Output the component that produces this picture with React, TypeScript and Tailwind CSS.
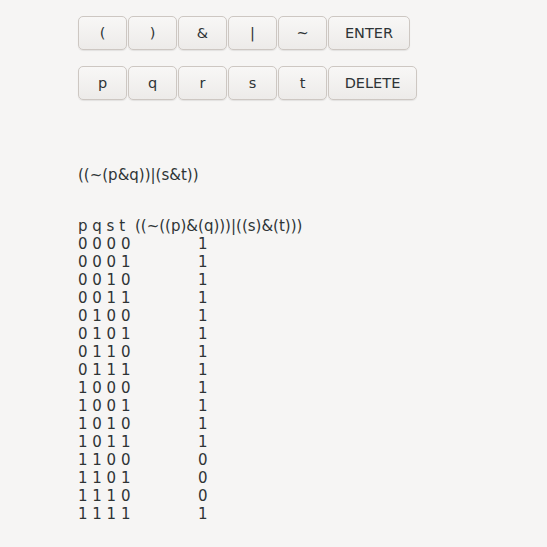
import React from "react";

const row1 = ["(", ")", "&", "|", "~"];
const row2 = ["p", "q", "r", "s", "t"];

function Key({ label, w = "w-[49px]" }: { label: string; w?: string }) {
  return (
    <button
      className={`${w} h-[34px] pt-[2px] rounded-[5px] border border-[#cdc7c2] bg-gradient-to-b from-[#f8f7f6] to-[#edebe9] text-[14.5px] text-[#2e3436] shadow-[0_1px_1px_rgba(0,0,0,0.08)]`}
    >
      {label}
    </button>
  );
}

export default function App() {
  const rows: { bits: number[]; out: number }[] = [];
  for (let i = 0; i < 16; i++) {
    const p = (i >> 3) & 1;
    const q = (i >> 2) & 1;
    const s = (i >> 1) & 1;
    const t = i & 1;
    const out = !(p && q) || (s && t) ? 1 : 0;
    rows.push({ bits: [p, q, s, t], out });
  }

  return (
    <div
      className="w-[547px] h-[547px] bg-[#f6f5f4] text-[#2e3436] pl-[78px] pt-[16px]"
      style={{ fontFamily: '"DejaVu Sans", sans-serif' }}
    >
      <div className="flex flex-col gap-[16px]">
        <div className="flex gap-[1px]">
          {row1.map((k) => (
            <Key key={k} label={k} />
          ))}
          <Key label="ENTER" w="w-[82px]" />
        </div>
        <div className="flex gap-[1px]">
          {row2.map((k) => (
            <Key key={k} label={k} />
          ))}
          <Key label="DELETE" w="w-[89px]" />
        </div>
      </div>

      <div className="mt-[66px] text-[15px] leading-[18px]">((~(p&amp;q))|(s&amp;t))</div>

      <div className="mt-[33px] text-[15px] leading-[18px]">
        <div className="flex">
          <span className="w-[57px]">p q s t</span>
          <span>((~((p)&amp;(q)))|((s)&amp;(t)))</span>
        </div>
        {rows.map((r, i) => (
          <div key={i} className="flex">
            <span className="w-[120px]">{r.bits.join(" ")}</span>
            <span>{r.out}</span>
          </div>
        ))}
      </div>
    </div>
  );
}
